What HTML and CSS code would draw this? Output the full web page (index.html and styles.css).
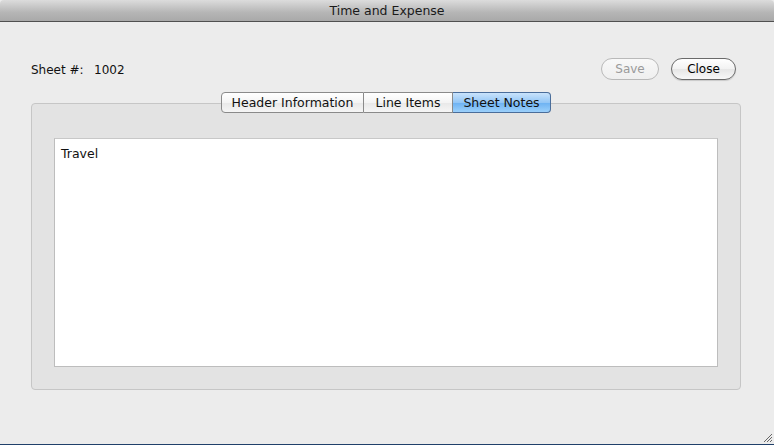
FILE: index.html
```html
<!DOCTYPE html>
<html>
<head>
<meta charset="utf-8">
<link rel="stylesheet" href="styles.css">
</head>
<body>
<div class="window">
  <div class="titlebar">Time and Expense</div>
  <div class="content">
    <div class="toprow">
      <div class="sheet"><span class="label">Sheet #:</span><span class="num">1002</span></div>
      <div class="buttons">
        <button class="btn disabled">Save</button>
        <button class="btn">Close</button>
      </div>
    </div>
    <div class="tabgroup">
      <div class="tabs">
        <div class="tab first">Header Information</div>
        <div class="tab mid">Line Items</div>
        <div class="tab last selected">Sheet Notes</div>
      </div>
      <div class="panel">
        <div class="notes">Travel</div>
      </div>
    </div>
  </div>
  <div class="grip">
    <svg width="12" height="12" viewBox="0 0 12 12"><path d="M11 3 L3 11 M11 6 L6 11 M11 9 L9 11" stroke="#666" stroke-width="1"/></svg>
  </div>
</div>
</body>
</html>
```
FILE: styles.css
```css
html, body { margin: 0; padding: 0; }
body {
  width: 774px; height: 445px; overflow: hidden;
  font-family: "Lucida Grande", "DejaVu Sans", sans-serif;
  font-size: 12px; color: #111;
  background: #ececec;
}
.window { position: relative; width: 774px; height: 445px; background: #ececec; border-bottom: 1px solid #20406a; box-sizing: border-box; display: flex; flex-direction: column; }
.titlebar {
  height: 21px; line-height: 21px; text-align: center;
  background: linear-gradient(#dcdcdc, #b5b5b5 60%, #a9a9a9);
  border-bottom: 1px solid #505050;
  border-radius: 4px 4px 0 0;
  font-size: 12.5px; color: #1a1a1a;
}
.content { padding: 0 33px 0 31px; flex: 1; display: flex; flex-direction: column; }
.toprow { display: flex; justify-content: space-between; align-items: center; margin-top: 36px; height: 22px; }
.sheet { padding-top: 1px; }
.sheet .label { display: inline-block; width: 63px; }
.buttons { display: flex; gap: 12px; margin-right: 5px; }
.btn {
  font-family: inherit; font-size: 12px; color: #000;
  height: 22px; padding: 0; border-radius: 11px;
  border: 1px solid #6a6a6a;
  background: linear-gradient(#ffffff, #f2f2f2 50%, #e6e6e6 51%, #f8f8f8);
  box-shadow: 0 1px 1px rgba(0,0,0,0.15);
  box-sizing: border-box;
}
.btn.disabled { color: #9a9a9a; border-color: #b9b9b9; box-shadow: none; background: linear-gradient(#f8f8f8, #efefef); width: 58px; }
.btn:not(.disabled) { width: 65px; }
.tabgroup { position: relative; margin-top: 12px; }
.tabs { position: absolute; left: 190px; top: 0; display: flex; height: 21px; z-index: 2; }
.tab {
  box-sizing: border-box;
  height: 21px; line-height: 19px; text-align: center;
  border: 1px solid #8a8a8a; border-left: none;
  background: linear-gradient(#ffffff, #f4f4f4 50%, #e8e8e8 51%, #f6f6f6);
  font-size: 12.5px;
}
.tab.first { border-left: 1px solid #8a8a8a; border-radius: 4px 0 0 4px; width: 143px; }
.tab.mid { width: 89px; }
.tab.last { border-radius: 0 4px 4px 0; width: 98px; }
.tab.selected {
  background: linear-gradient(#c9e3fb, #93c6f6 50%, #6cb1f2 51%, #9bd0fb);
  border-color: #4a6d9a;
}
.panel {
  margin-top: 11px;
  height: 287px; box-sizing: border-box;
  background: #e3e3e3; border: 1px solid #c6c6c6; border-radius: 4px;
  padding: 34px 22px 22px 22px;
}
.notes {
  height: 229px; box-sizing: border-box;
  background: #fff; border: 1px solid #bdbdbd; border-top-color: #c8c8c8;
  padding: 7px 6px; font-size: 12.5px;
}
.grip { position: absolute; right: 1px; bottom: 1px; width: 12px; height: 12px; }
.grip svg { display: block; }
```
